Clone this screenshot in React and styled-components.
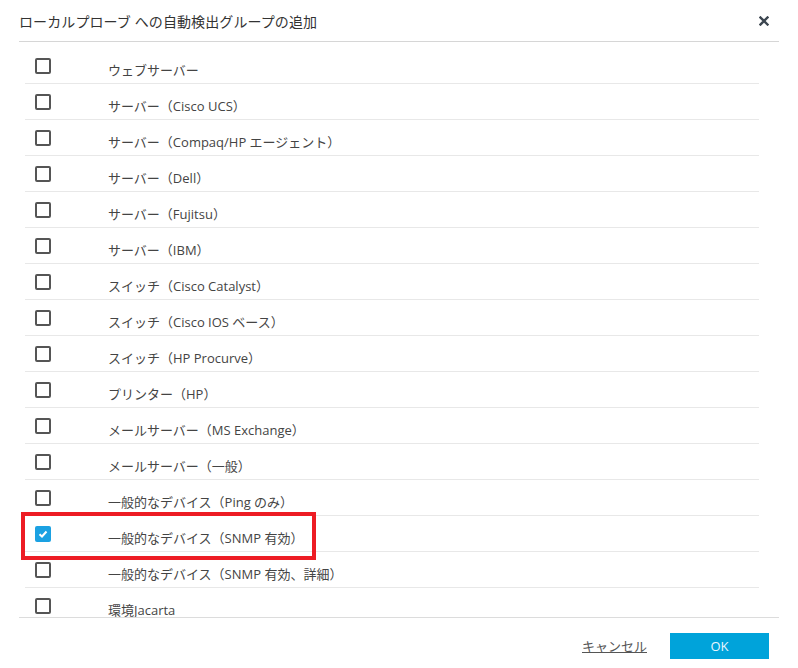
import React from 'react'
import styled, { createGlobalStyle } from 'styled-components'

const Global = createGlobalStyle`
body{
  margin:0;
  background:#fff;
  font-family:"Open Sans","Noto Sans CJK JP",sans-serif;
}
`;

const Dialog = styled.div`
width:798px;
height:668px;
display:flex;
flex-direction:column;
background:#fff;
`;

const Header = styled.div`
height:42px;
margin:0 19px;
border-bottom:1px solid #d6d6d6;
display:flex;
align-items:center;
justify-content:space-between;
box-sizing:border-box;
`;

const Title = styled.h1`
margin:0;
font-size:14px;
font-weight:normal;
color:#333;
letter-spacing:0.1px;
`;

const Close = styled.button`
border:none;
background:none;
padding:0;
margin-right:10px;
display:flex;
cursor:pointer;
`;

const List = styled.div`
height:576px;
margin:0 19px;
padding:6px 20px 0 6px;
box-sizing:border-box;
overflow:hidden;
border-bottom:1px solid #dcdcdc;
`;

const Row = styled.div`
position:relative;
height:36px;
box-sizing:border-box;
border-bottom:1px solid #e8e8e8;
display:flex;
align-items:flex-start;
`;

const Box = styled.span`
width:16px;
height:16px;
margin:10px 0 0 10px;
box-sizing:border-box;
border-radius:2px;
flex-shrink:0;
display:flex;
align-items:center;
justify-content:center;
border:${(p)=>p.checked ? 'none' : '2.5px solid #555'};
background:${(p)=>p.checked ? '#1ba1e2' : '#fff'};
`;

const Label = styled.span`
margin:13px 0 0 57px;
font-size:13px;
line-height:18px;
color:#444;
`;

const Mark = styled.div`
position:absolute;
top:-4px;
left:-4px;
width:295px;
height:48px;
box-sizing:border-box;
border:4px solid #ed1c24;
pointer-events:none;
`;

const Footer = styled.div`
flex:1;
display:flex;
align-items:flex-start;
justify-content:flex-end;
padding:15px 29px 0 0;
gap:23px;
`;

const Cancel = styled.a`
margin-top:3px;
font-size:13px;
color:#555;
text-decoration:underline;
cursor:pointer;
`;

const OkButton = styled.button`
width:99px;
height:26px;
border:none;
background:#00a3da;
color:#e8f6ff;
font-family:"Open Sans",sans-serif;
font-size:13px;
cursor:pointer;
`;

const items = [
  'ウェブサーバー',
  'サーバー（Cisco UCS）',
  'サーバー（Compaq/HP エージェント）',
  'サーバー（Dell）',
  'サーバー（Fujitsu）',
  'サーバー（IBM）',
  'スイッチ（Cisco Catalyst）',
  'スイッチ（Cisco IOS ベース）',
  'スイッチ（HP Procurve）',
  'プリンター（HP）',
  'メールサーバー（MS Exchange）',
  'メールサーバー（一般）',
  '一般的なデバイス（Ping のみ）',
  '一般的なデバイス（SNMP 有効）',
  '一般的なデバイス（SNMP 有効、詳細）',
  '環境Jacarta',
]

const App = () => {
  return (
    <Dialog>
      <Global />
      <Header>
        <Title>ローカルプローブ への自動検出グループの追加</Title>
        <Close>
          <svg width="10" height="10" viewBox="0 0 10 10">
            <path d="M1.5 1.5 L8.5 8.5 M8.5 1.5 L1.5 8.5" stroke="#3c4650" strokeWidth="2.4" strokeLinecap="square" />
          </svg>
        </Close>
      </Header>
      <List>
        {items.map((t, i) => {
          const on = i === 13
          return (
            <Row key={t}>
              <Box checked={on}>
                {on && (
                  <svg width="10" height="8" viewBox="0 0 10 8">
                    <path d="M1.5 4.2 L4 6.5 L8.5 1.5" stroke="#fff" strokeWidth="2" fill="none" />
                  </svg>
                )}
              </Box>
              <Label>{t}</Label>
              {on && <Mark />}
            </Row>
          )
        })}
      </List>
      <Footer>
        <Cancel>キャンセル</Cancel>
        <OkButton>OK</OkButton>
      </Footer>
    </Dialog>
  )
}

export default App
